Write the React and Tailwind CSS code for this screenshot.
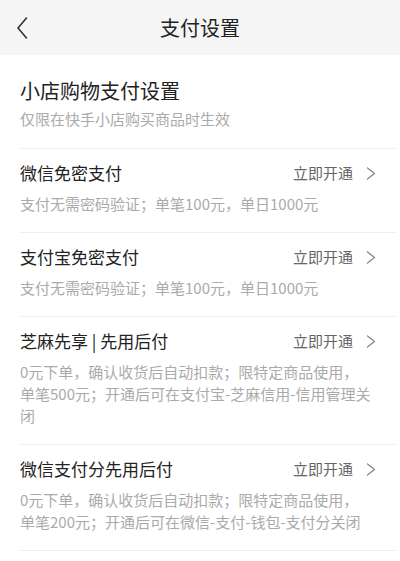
import React from "react";

const font = { fontFamily: '"Noto Sans CJK SC", "Noto Sans", sans-serif' };

function Chevron() {
  return (
    <svg width="10" height="13" viewBox="0 0 10 13" fill="none">
      <path d="M1.5 1 L8.5 6.5 L1.5 12" stroke="#8a8a8a" strokeWidth="1.4" strokeLinecap="round" strokeLinejoin="round" />
    </svg>
  );
}

function Row({ title, lines }) {
  return (
    <div className="ml-5 mr-1 border-b border-[#efefef] pt-3 pb-[17px]">
      <div className="flex h-6 items-center justify-between pr-5">
        <span className="text-[17px] leading-6 text-[#222]">{title}</span>
        <span className="flex items-center gap-[13px]">
          <span className="text-[15px] leading-6 text-[#666]">立即开通</span>
          <Chevron />
        </span>
      </div>
      <div className="mt-2 text-[15px] leading-[22px] text-[#aaa]">
        {lines.map((l, i) => (
          <div key={i} className="whitespace-nowrap">{l}</div>
        ))}
      </div>
    </div>
  );
}

export default function App() {
  return (
    <div className="h-[561px] w-[400px] overflow-hidden bg-white" style={font}>
      <div className="grid h-[55px] grid-cols-[60px_1fr_60px] items-center bg-[#f5f5f5]">
        <div className="pl-[17px] pt-[1px]">
          <svg width="11" height="22" viewBox="0 0 11 22" fill="none">
            <path d="M9.5 1 L1 11 L9.5 21" stroke="#333" strokeWidth="1.6" strokeLinecap="round" strokeLinejoin="round" />
          </svg>
        </div>
        <div className="text-center text-[20px] leading-7 text-[#222]">支付设置</div>
        <div />
      </div>
      <div className="ml-5 mr-1 border-b border-[#efefef] pt-[22px] pb-[18px]">
        <div className="text-[20px] leading-7 text-[#222]">小店购物支付设置</div>
        <div className="mt-[3px] text-[15px] leading-[22px] text-[#aaa]">仅限在快手小店购买商品时生效</div>
      </div>
      <Row title="微信免密支付" lines={["支付无需密码验证；单笔100元，单日1000元"]} />
      <Row title="支付宝免密支付" lines={["支付无需密码验证；单笔100元，单日1000元"]} />
      <Row
        title="芝麻先享 | 先用后付"
        lines={["0元下单，确认收货后自动扣款；限特定商品使用，", "单笔500元；开通后可在支付宝-芝麻信用-信用管理关", "闭"]}
      />
      <Row
        title="微信支付分先用后付"
        lines={["0元下单，确认收货后自动扣款；限特定商品使用，", "单笔200元；开通后可在微信-支付-钱包-支付分关闭"]}
      />
    </div>
  );
}
